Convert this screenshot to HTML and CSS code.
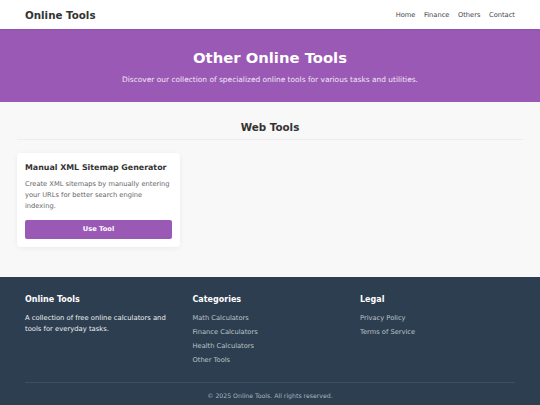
FILE: index.html
```html
<!DOCTYPE html>
<html>
  <head>
    <title>Other Online Tools</title>
    <meta charset="utf-8" />
    <link rel="stylesheet" href="styles.css">
  </head>
  <body>
    <header class="site-header">
      <div class="container header-inner">
        <a class="logo" href="#">Online Tools</a>
        <nav class="main-nav">
          <a href="#">Home</a>
          <a href="#">Finance</a>
          <a href="#">Others</a>
          <a href="#">Contact</a>
        </nav>
      </div>
    </header>

    <section class="hero">
      <h1>Other Online Tools</h1>
      <p>Discover our collection of specialized online tools for various tasks and utilities.</p>
    </section>

    <main class="tools">
      <div class="tools-inner">
        <h2 class="section-title">Web Tools</h2>
        <div class="tool-grid">
          <div class="tool-card">
            <h3>Manual XML Sitemap Generator</h3>
            <p>Create XML sitemaps by manually entering your URLs for better search engine indexing.</p>
            <a class="btn" href="#">Use Tool</a>
          </div>
        </div>
      </div>
    </main>

    <footer class="site-footer">
      <div class="container">
        <div class="footer-cols">
          <div class="footer-col">
            <h4>Online Tools</h4>
            <p>A collection of free online calculators and tools for everyday tasks.</p>
          </div>
          <div class="footer-col">
            <h4>Categories</h4>
            <ul>
              <li><a href="#">Math Calculators</a></li>
              <li><a href="#">Finance Calculators</a></li>
              <li><a href="#">Health Calculators</a></li>
              <li><a href="#">Other Tools</a></li>
            </ul>
          </div>
          <div class="footer-col">
            <h4>Legal</h4>
            <ul>
              <li><a href="#">Privacy Policy</a></li>
              <li><a href="#">Terms of Service</a></li>
            </ul>
          </div>
        </div>
        <div class="copyright">&copy; 2025 Online Tools. All rights reserved.</div>
      </div>
    </footer>
  </body>
</html>
```

FILE: styles.css
```css
*{
  margin:0;
  padding:0;
  box-sizing:border-box;
}
body{
  font-family:"DejaVu Sans", Verdana, sans-serif;
  color:#333;
  background:#f8f8f8;
}
a{
  text-decoration:none;
  color:inherit;
}
.container{
  padding:0 25px;
}

/* top bar */
.site-header{
  background:#fff;
  height:29px;
  box-shadow:0 1px 2px rgba(0,0,0,.08);
  position:relative;
}
.header-inner{
  height:29px;
  display:flex;
  align-items:center;
  justify-content:space-between;
}
.logo{
  font-size:10.3px;
  font-weight:bold;
  color:#333;
}
.main-nav{
  display:flex;
  gap:8.5px;
}
.main-nav a{
  font-size:6.7px;
  color:#444;
}

/* purple banner */
.hero{
  background:#9b59b6;
  color:#fff;
  text-align:center;
  height:73px;
  padding-top:20px;
}
.hero h1{
  font-size:14.8px;
  line-height:18px;
}
.hero p{
  font-size:7.45px;
  line-height:10px;
  margin-top:8px;
  color:#f1e6f5;
}

/* tools list */
.tools{
  padding:18px 0 30px;
}
.tools-inner{
  padding:0 17px;
}
.section-title{
  text-align:center;
  font-size:10.35px;
  line-height:14px;
  padding-bottom:5px;
  border-bottom:1px solid #eee;
}
.tool-grid{
  display:grid;
  grid-template-columns:163px;
  margin-top:13px;
}
.tool-card{
  background:#fff;
  border-radius:4px;
  padding:10px 8px 8px;
  box-shadow:0 1px 5px rgba(0,0,0,.06);
}
.tool-card h3{
  font-size:7.9px;
  line-height:10px;
  color:#333;
  margin-bottom:6px;
}
.tool-card p{
  font-size:6.7px;
  line-height:11px;
  color:#666;
  margin-bottom:8px;
}
.btn{
  display:block;
  background:#9b59b6;
  color:#fff;
  font-size:6.7px;
  font-weight:bold;
  text-align:center;
  height:18.5px;
  line-height:18.5px;
  border-radius:2px;
}

/* footer */
.site-footer{
  background:#2c3e50;
  color:#fff;
  padding:18px 0 14px;
}
.footer-cols{
  display:grid;
  grid-template-columns:repeat(3,1fr);
  gap:0 12.5px;
}
.footer-col h4{
  font-size:8px;
  line-height:10px;
  margin-bottom:8.3px;
}
.footer-col p{
  font-size:6.8px;
  line-height:10.7px;
  color:#ecf0f1;
}
.footer-col ul{
  list-style:none;
}
.footer-col li{
  font-size:6.7px;
  line-height:10.7px;
  margin-bottom:3.5px;
  color:#bdc3c7;
}
.copyright{
  margin-top:12px;
  border-top:1px solid #3d4f61;
  padding-top:9.4px;
  text-align:center;
  font-size:6.2px;
  line-height:8px;
  color:#aab4bd;
}
```
